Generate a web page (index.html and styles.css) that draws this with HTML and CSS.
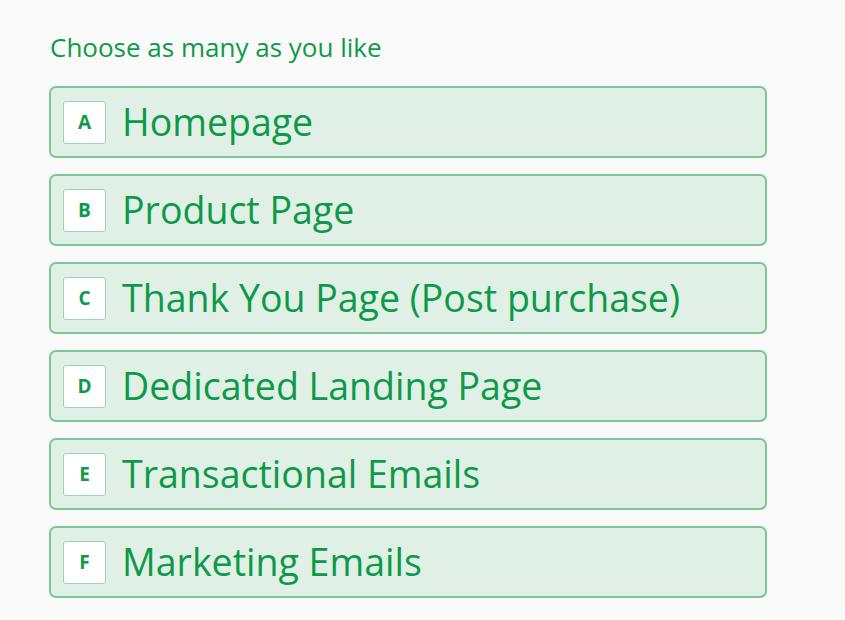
FILE: index.html
```html
<!DOCTYPE html>
<html lang="en">
<head>
    <meta charset="UTF-8">
    <meta name="viewport" content="width=device-width, initial-scale=1.0">
    <title>Choose as many as you like</title>
    <link rel="stylesheet" href="styles.css">
</head>
<body>
    <div class="question">
        <div class="hint">Choose as many as you like</div>
        <ul class="choices">
            <li class="choice"><span class="key">A</span><span class="label">Homepage</span></li>
            <li class="choice"><span class="key">B</span><span class="label">Product Page</span></li>
            <li class="choice"><span class="key">C</span><span class="label">Thank You Page (Post purchase)</span></li>
            <li class="choice"><span class="key">D</span><span class="label">Dedicated Landing Page</span></li>
            <li class="choice"><span class="key">E</span><span class="label">Transactional Emails</span></li>
            <li class="choice"><span class="key">F</span><span class="label">Marketing Emails</span></li>
        </ul>
    </div>
</body>
</html>
```

FILE: styles.css
```css
body {
    font-family: "Open Sans", "Noto Sans", sans-serif;
    background: #fafafa;
    color: #0d9a48;
    margin: 0;
}
.question {
    width: 718px;
    padding: 29px 0 0 49px;
}
.hint {
    font-size: 26px;
    line-height: 36px;
    margin-left: 1px;
}
.choices {
    list-style: none;
    margin: 21px 0 0;
    padding: 0;
    display: flex;
    flex-direction: column;
    gap: 16px;
}
.choice {
    height: 72px;
    box-sizing: border-box;
    display: flex;
    align-items: center;
    padding: 0 12px;
    background: #e0f0e6;
    border: 2px solid #7cc79a;
    border-radius: 7px;
}
.key {
    width: 43px;
    height: 43px;
    box-sizing: border-box;
    display: flex;
    align-items: center;
    justify-content: center;
    background: #fff;
    border: 1px solid #9cd4b2;
    border-radius: 3px;
    font-size: 19px;
    font-weight: 700;
    margin-right: 16px;
}
.label {
    font-size: 37.5px;
    line-height: 44px;
}
```
